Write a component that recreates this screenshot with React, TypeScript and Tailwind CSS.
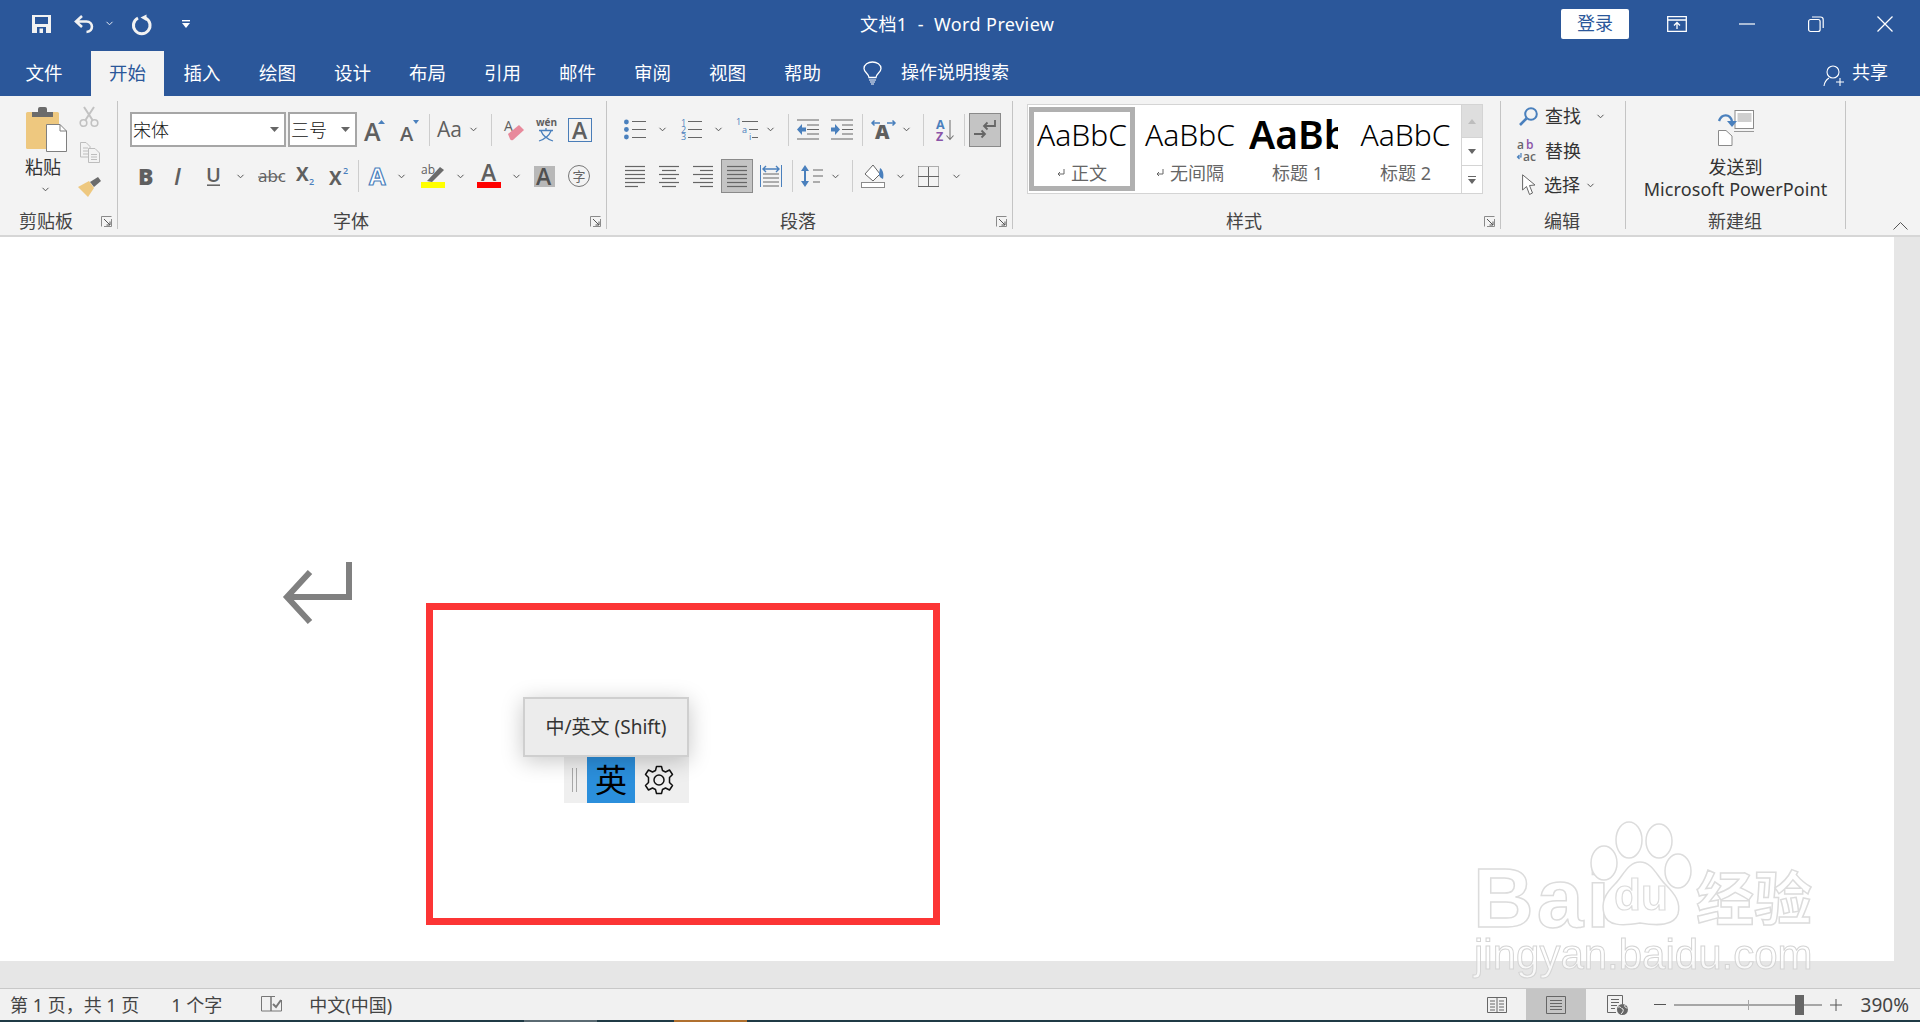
import React from "react";

const G = "#666666";
const B = "#4a80bd";
const LF = "Open Sans, Liberation Sans, sans-serif";

function S({ w, h, className = "", children }: { w: number; h: number; className?: string; children?: React.ReactNode }) {
  return (
    <svg width={w} height={h} viewBox={`0 0 ${w} ${h}`} fill="none" className={"shrink-0 overflow-visible " + className}>
      {children}
    </svg>
  );
}

function Chev({ className = "", color = "#555555" }: { className?: string; color?: string }) {
  return (
    <S w={7} h={5} className={className}>
      <path d="M.5 .8 L3.5 3.8 L6.5 .8" stroke={color} strokeWidth="1" />
    </S>
  );
}

function Sep({ className = "", h = "h-[32px]" }: { className?: string; h?: string }) {
  return <div className={"w-[1px] shrink-0 bg-[#cdcdcd] " + h + " " + className} />;
}

function Launcher({ className = "" }: { className?: string }) {
  return (
    <S w={11} h={11} className={className}>
      <path d="M.5 10.5 V.5 H10.5" stroke="#8a8a8a" />
      <path d="M10.5 3 V10.5 H3" stroke="#8a8a8a" />
      <path d="M3 3 L9 9 M9 5.5 V9 H5.5" stroke="#555" />
    </S>
  );
}

function Group({ w, label, labelMl, launcher, children }: { w: string; label: string; labelMl: string; launcher?: boolean; children: React.ReactNode }) {
  return (
    <div className={"mt-[5px] flex h-[128px] shrink-0 flex-col border-r border-[#c4c4c4] " + w}>
      <div className="h-[113px] shrink-0">{children}</div>
      <div className="flex h-[15px] items-center">
        <span className={"text-[18px] leading-[15px] whitespace-nowrap text-[#444] " + labelMl}>{label}</span>
        {launcher && <Launcher className="mr-[5px] ml-auto" />}
      </div>
    </div>
  );
}

function Lines({ w, rows }: { w: number; rows: [number, number][] }) {
  return (
    <S w={w} h={22}>
      {rows.map(([a, b], i) => (
        <path key={i} d={`M${a} ${1.5 + i * 4} H${b}`} stroke={G} strokeWidth="1.2" />
      ))}
    </S>
  );
}

function Letter({ ch, size, y, x = 0, fill = "#5f5f5f", weight = 600, style }: { w?: number; h?: number; ch: string; size: number; y: number; x?: number; fill?: string; weight?: number; style?: string }) {
  return (
    <text x={x} y={y} fontSize={size} fontFamily={LF} fontWeight={weight} fontStyle={style} fill={fill}>
      {ch}
    </text>
  );
}

function GalleryLabel({ text, mark, className = "" }: { text: string; mark?: boolean; className?: string }) {
  return (
    <div className={"flex h-[18px] items-center gap-[6px] text-[18px] leading-[18px] whitespace-nowrap text-[#666] " + className}>
      {mark && (
        <S w={8} h={8}>
          <path d="M7 0 V5 H1 M3 3 L1 5 L3 7" stroke="#666" />
        </S>
      )}
      {text}
    </div>
  );
}

const Sample = ({ className = "" }: { className?: string }) => (
  <div className={"text-[30px] leading-[30px] font-light whitespace-nowrap text-black " + className}>AaBbC</div>
);

function TopBar() {
  const tabs: [string, string][] = [
    ["插入", "w-[76px]"], ["绘图", "w-[75px]"], ["设计", "w-[75px]"], ["布局", "w-[75px]"],
    ["引用", "w-[75px]"], ["邮件", "w-[75px]"], ["审阅", "w-[75px]"], ["视图", "w-[75px]"], ["帮助", "w-[75px]"],
  ];
  return (
    <div className="bg-[#2b579a] text-white">
      <div className="flex h-[51px] items-center pb-[4px]">
        <S w={19} h={18} className="ml-[32px]">
          <path fillRule="evenodd" d="M0 0 H19 V18 H0 Z M3 2 V9 H16 V2 Z M5 12 V18 H14 V12 Z" fill="#f2f2f2" />
          <path d="M7.5 13.5 H11 V18 H7.5 Z" fill="#f2f2f2" />
        </S>
        <S w={22} h={20} className="ml-[22px]">
          <path d="M9 2 L3 7.5 L9 13 M3 7.5 H13.5 C20.5 7.5 21 17.5 13.5 18" stroke="#f2f2f2" strokeWidth="2.6" />
        </S>
        <Chev className="ml-[11px]" color="#e4e9f2" />
        <S w={21} h={20} className="ml-[18px]">
          <path d="M7 4 A8.3 8.3 0 1 0 14.5 4" stroke="#f2f2f2" strokeWidth="3" />
          <path d="M15.5 .5 V7 L9.5 3.5 Z" fill="#f2f2f2" />
        </S>
        <S w={8} h={8} className="ml-[30px]">
          <path d="M0 .7 H8" stroke="#fff" strokeWidth="1.4" />
          <path d="M0 3 H8 L4 8 Z" fill="#fff" />
        </S>
        <span className="ml-[670px] text-[18px] leading-[20px] tracking-[0.4px] whitespace-pre">文档1  -  Word Preview</span>
        <div className="ml-auto flex h-[30px] w-[68px] items-center justify-center rounded-[2px] bg-white text-[18px] text-[#2b579a]">登录</div>
        <S w={20} h={16} className="ml-[38px]">
          <path d="M.7 .7 H19.3 V15.3 H.7 Z M.7 4 H19.3" stroke="#fff" strokeWidth="1.3" />
          <path d="M10 13 V7 M7 9.5 L10 6.5 L13 9.5" stroke="#fff" strokeWidth="1.3" />
        </S>
        <S w={16} h={2} className="ml-[52px]">
          <path d="M0 1 H16" stroke="#fff" strokeWidth="1.2" />
        </S>
        <S w={16} h={16} className="ml-[53px]">
          <rect x=".6" y="3.5" width="11.5" height="12" rx="2" stroke="#fff" strokeWidth="1.2" />
          <path d="M4 1 H12.5 Q15.2 1 15.2 3.7 V12" stroke="#fff" strokeWidth="1.2" />
        </S>
        <S w={16} h={16} className="mr-[27px] ml-[53px]">
          <path d="M.5 .5 L15.5 15.5 M15.5 .5 L.5 15.5" stroke="#fff" strokeWidth="1.3" />
        </S>
      </div>
      <div className="flex h-[45px] items-stretch text-[18.5px]">
        <div className="mr-[3px] flex w-[88px] items-center justify-center pb-[2px]">文件</div>
        <div className="flex w-[73px] items-center justify-center bg-[#f3f3f3] pb-[2px] text-[#2b579a]">开始</div>
        {tabs.map(([t, w]) => (
          <div key={t} className={"flex items-center justify-center pb-[2px] " + w}>{t}</div>
        ))}
        <S w={19} h={24} className="mt-[10px] ml-[23px] self-start">
          <path d="M6 16.5 C6 13 1 11.5 1 7.5 C1 3.5 5 1 9.5 1 C14 1 18 3.5 18 7.5 C18 11.5 13 13 13 16.5 Z" stroke="#fff" strokeWidth="1.3" />
          <path d="M6 19 H13 M7 21 H12 M8 23 H11" stroke="#fff" strokeWidth="1.2" />
        </S>
        <div className="ml-[19px] flex items-center pb-[2px] text-[18px]">操作说明搜索</div>
        <S w={22} h={22} className="mt-[14px] ml-auto self-start">
          <circle cx="10" cy="7" r="6" stroke="#fff" strokeWidth="1.1" />
          <path d="M1 21 C1.5 17 3.5 14.5 6 13 M17 13 V21 M13 17 H21" stroke="#fff" strokeWidth="1.1" />
        </S>
        <div className="mr-[32px] ml-[7px] flex items-center pb-[2px] text-[18px]">共享</div>
      </div>
    </div>
  );
}

function Clipboard() {
  return (
    <Group w="w-[118px]" label="剪贴板" labelMl="ml-[19px]" launcher>
      <div className="flex">
        <div className="flex w-[78px] flex-col">
          <S w={41} h={45} className="mt-[6px] ml-[26px]">
            <rect x="0" y="5" width="33" height="37" rx="1.5" fill="#eec87f" />
            <path d="M6 10 V5 H12 V2 Q12 0 14 0 H19 Q21 0 21 2 V5 H27 V10 Z" fill="#6b6b6b" />
            <path d="M20.5 17.5 H34 L40.5 24 V44.5 H20.5 Z" fill="#fff" stroke="#7f7f7f" />
            <path d="M34 17.5 V24 H40.5" stroke="#7f7f7f" />
          </S>
          <div className="mt-[6px] ml-[25px] text-[18px] leading-[18px] text-[#333]">粘贴</div>
          <Chev className="mt-[11px] ml-[42px]" />
        </div>
        <div className="mt-[6px] flex flex-col">
          <S w={20} h={20} className="ml-[1px]">
            <path d="M5 0 L13.5 13 M15 0 L6.5 13" stroke="#c2c2c2" strokeWidth="2" />
            <circle cx="4.5" cy="16" r="3.3" stroke="#c2c2c2" strokeWidth="1.6" />
            <circle cx="15.5" cy="16" r="3.3" stroke="#c2c2c2" strokeWidth="1.6" />
          </S>
          <S w={20} h={21} className="mt-[15px] ml-[2px]">
            <path d="M.5 .5 H6 L10 4.5 V15 H.5 Z M3 6 H8 M3 9 H8 M3 12 H8" stroke="#bdbdbd" />
            <path d="M8.5 6.5 H15 L19.5 11 V20.5 H8.5 Z M11 12.5 H17 M11 15 H17 M11 17.5 H17" fill="#f3f3f3" stroke="#bdbdbd" />
          </S>
          <S w={23} h={20} className="mt-[14px]">
            <path d="M0 10 L11 4 L16 11 L10 20 Z" fill="#eec87f" />
            <path d="M12 5 L20 0 L23 4 L16 10 Z" fill="#6b6b6b" />
          </S>
        </div>
      </div>
    </Group>
  );
}

function FontGroup() {
  return (
    <Group w="w-[489px]" label="字体" labelMl="ml-[215px]" launcher>
      <div className="mt-[11px] flex h-[35px] items-center">
        <div className="ml-[12px] flex h-[35px] w-[156px] items-center border-2 border-[#a6a6a6] bg-white pl-[1px] text-[18px] leading-[18px] font-light text-[#111]">
          宋体
          <S w={9} h={5} className="mr-[5px] ml-auto">
            <path d="M0 0 H9 L4.5 5 Z" fill="#666" />
          </S>
        </div>
        <div className="ml-[2px] flex h-[35px] w-[69px] items-center border-2 border-[#a6a6a6] bg-white pl-[1px] text-[18px] leading-[18px] font-light text-[#111]">
          三号
          <S w={9} h={5} className="mr-[5px] ml-auto">
            <path d="M0 0 H9 L4.5 5 Z" fill="#666" />
          </S>
        </div>
        <S w={20} h={22} className="ml-[8px]">
          <Letter ch="A" size={25} y={22} x={-1} />
          <path d="M13 5 L16.5 1 L20 5 Z" fill={B} />
        </S>
        <S w={19} h={22} className="ml-[15px]">
          <Letter ch="A" size={20} y={22} x={0} />
          <path d="M13 1 H19 L16 5 Z" fill={B} />
        </S>
        <Sep className="ml-[10px]" />
        <S w={25} h={18} className="ml-[8px]">
          <Letter ch="Aa" size={21} y={16} x={-1} weight={500} />
        </S>
        <Chev className="ml-[7px]" />
        <Sep className="ml-[14px]" />
        <S w={20} h={22} className="ml-[12px]">
          <Letter ch="A" size={14} y={12} x={0} weight={500} />
          <path d="M4 15 L15 6 L20 11 L9 21 Q7 22 6 20 Z" fill="#e8899b" />
        </S>
        <S w={20} h={24} className="ml-[12px]">
          <Letter ch="wén" size={10} y={8} x={0} weight={700} />
          <path d="M10 10 V12 M3 12.5 H17 M5 13 C7 18 11 21 17 23 M15 13 C13 18 9 21 3 23" stroke={B} strokeWidth="1.3" />
        </S>
        <div className="ml-[12px] flex h-[24px] w-[24px] items-center justify-center border border-[#4a7db8]">
          <S w={18} h={18}>
            <Letter ch="A" size={23} y={18} x={1} />
          </S>
        </div>
      </div>
      <div className="mt-[12px] flex h-[34px] items-center">
        <S w={13} h={17} className="ml-[22px]">
          <Letter ch="B" size={23} y={17} x={-2} weight={800} />
        </S>
        <S w={12} h={17} className="ml-[20px]">
          <Letter ch="I" size={23} y={17} x={1} weight={600} style="italic" />
        </S>
        <S w={13} h={19} className="ml-[22px]">
          <Letter ch="U" size={20} y={15} x={-1} weight={600} />
          <path d="M0 18.2 H13" stroke="#5f5f5f" strokeWidth="1.5" />
        </S>
        <Chev className="ml-[17px]" />
        <S w={24} h={16} className="ml-[14px]">
          <Letter ch="abc" size={17} y={14} x={0} weight={500} />
          <path d="M0 9 H24" stroke="#5f5f5f" strokeWidth="1.1" />
        </S>
        <S w={18} h={18} className="ml-[15px]">
          <Letter ch="X" size={19} y={14} x={-1} weight={700} />
          <Letter ch="2" size={9} y={18} x={12} fill={B} />
        </S>
        <S w={19} h={18} className="ml-[15px]">
          <Letter ch="X" size={19} y={18} x={-1} weight={700} />
          <Letter ch="2" size={9} y={7} x={13} fill={B} />
        </S>
        <Sep className="ml-[9px]" />
        <S w={17} h={20} className="ml-[11px]">
          <text x="-1" y="19" fontSize="24" fontFamily={LF} fontWeight="700" fill="#fff" stroke="#4a80bd" strokeWidth="1.2">A</text>
        </S>
        <Chev className="ml-[11px]" />
        <S w={24} h={24} className="ml-[16px]">
          <Letter ch="ab" size={12} y={10} x={0} weight={500} />
          <path d="M6 17 L19 3 L23 6 L11 18 Z" fill="#6b6b6b" />
          <rect x="0" y="18" width="24" height="6" fill="#ffff00" />
        </S>
        <Chev className="ml-[12px]" />
        <S w={24} h={24} className="ml-[13px]">
          <Letter ch="A" size={23} y={17} x={4} />
          <rect x="0" y="18" width="24" height="6" fill="#ff0000" />
        </S>
        <Chev className="ml-[12px]" />
        <div className="ml-[14px] flex h-[21px] w-[21px] items-center justify-center bg-[#b8b8b8]">
          <S w={17} h={17}>
            <Letter ch="A" size={23} y={17} x={0} fill="#505050" />
          </S>
        </div>
        <div className="ml-[13px] flex h-[22px] w-[22px] items-center justify-center rounded-full border border-[#777] text-[13px] leading-none text-[#666]">字</div>
      </div>
    </Group>
  );
}

function ParagraphGroup() {
  const L: [number, number][] = [[0, 20], [0, 20], [0, 20], [0, 20], [0, 20], [0, 13]];
  const C: [number, number][] = [[0, 20], [3, 17], [0, 20], [3, 17], [0, 20], [3, 17]];
  const R: [number, number][] = [[0, 20], [7, 20], [0, 20], [7, 20], [0, 20], [7, 20]];
  const n = (ch: string, x: number, y: number) => (
    <text x={x} y={y} fontSize="9" fontFamily={LF} fill={B}>{ch}</text>
  );
  return (
    <Group w="w-[406px]" label="段落" labelMl="ml-[173px]" launcher>
      <div className="mt-[11px] flex h-[35px] items-center">
        <S w={22} h={21} className="ml-[17px]">
          <circle cx="2.4" cy="3" r="2.4" fill={B} />
          <circle cx="2.4" cy="10.5" r="2.4" fill={B} />
          <circle cx="2.4" cy="18" r="2.4" fill={B} />
          <path d="M8 2.5 H22 M8 10.5 H22 M8 18.5 H22" stroke={G} strokeWidth="1.1" />
        </S>
        <Chev className="ml-[13px]" />
        <S w={22} h={21} className="ml-[14px]">
          {n("1", 1, 7)}{n("2", 1, 14)}{n("3", 1, 21)}
          <path d="M8 2.5 H22 M8 10.5 H22 M8 18.5 H22" stroke={G} strokeWidth="1.1" />
        </S>
        <Chev className="ml-[13px]" />
        <S w={22} h={21} className="ml-[14px]">
          {n("1", 0, 6)}{n("a", 6, 14)}{n("i", 13, 21)}
          <path d="M6 2.5 H22 M13 10.5 H22 M16 18.5 H22" stroke={G} strokeWidth="1.1" />
        </S>
        <Chev className="ml-[9px]" />
        <Sep className="ml-[14px]" />
        <S w={22} h={21} className="ml-[8px]">
          <path d="M0 1 H22 M10 6 H22 M10 10.5 H22 M10 15 H22 M0 20 H22" stroke={G} strokeWidth="1.1" />
          <path d="M0 10.5 L5 5 V8.5 H9 V12.5 H5 V16 Z" fill={B} />
        </S>
        <S w={22} h={21} className="ml-[12px]">
          <path d="M0 1 H22 M11 6 H22 M11 10.5 H22 M11 15 H22 M0 20 H22" stroke={G} strokeWidth="1.1" />
          <path d="M9 10.5 L4 5 V8.5 H0 V12.5 H4 V16 Z" fill={B} />
        </S>
        <Sep className="ml-[9px]" />
        <S w={23} h={19} className="ml-[9px]">
          <path d="M0 3 H8 M2.5 .5 L0 3 L2.5 5.5 M15 3 H23 M20.5 .5 L23 3 L20.5 5.5" stroke={B} strokeWidth="1.5" />
          <text x="3" y="19" fontSize="20" fontFamily={LF} fontWeight="800" fill="#5f5f5f">A</text>
        </S>
        <Chev className="ml-[8px]" />
        <Sep className="ml-[13px]" />
        <S w={18} h={22} className="ml-[12px]">
          <text x="0" y="10" fontSize="12.5" fontFamily={LF} fontWeight="700" fill={B}>A</text>
          <text x="0" y="22" fontSize="12.5" fontFamily={LF} fontWeight="700" fill="#8a55a8">Z</text>
          <path d="M14 1 V20 M10.5 16.5 L14 20.5 L17.5 16.5" stroke="#777" strokeWidth="1.1" />
        </S>
        <Sep className="ml-[10px]" />
        <div className="ml-[4px] flex h-[34px] w-[32px] items-center justify-center border border-[#8a8a8a] bg-[#c4c4c4]">
          <S w={22} h={20}>
            <path d="M21 0 V6 H10 M13.5 2.5 L10 6 L13.5 9.5" stroke="#666" strokeWidth="1.8" />
            <path d="M0 14 H11 M7.5 10.5 L11 14 L7.5 17.5" stroke="#666" strokeWidth="1.8" />
          </S>
        </div>
      </div>
      <div className="mt-[12px] flex h-[34px] items-center">
        <div className="ml-[18px]"><Lines w={20} rows={L} /></div>
        <div className="ml-[14px]"><Lines w={20} rows={C} /></div>
        <div className="ml-[14px]"><Lines w={20} rows={R} /></div>
        <div className="ml-[8px] flex h-[34px] w-[32px] items-center justify-center border border-[#8a8a8a] bg-[#c4c4c4]">
          <S w={20} h={22}>
            {[0, 1, 2, 3, 4, 5].map((i) => (
              <path key={i} d={`M0 ${1.5 + i * 4} H20`} stroke={G} strokeWidth="1.2" />
            ))}
          </S>
        </div>
        <S w={22} h={22} className="ml-[7px]">
          <path d="M.5 0 V22 M21.5 0 V22" stroke={B} />
          <path d="M3 4 H19 M6 1 L3 4 L6 7 M16 1 L19 4 L16 7" stroke={B} strokeWidth="1.4" />
          <path d="M3 9 H19 M3 13 H19 M3 17 H19 M3 21 H19" stroke={G} />
        </S>
        <Sep className="ml-[10px]" />
        <S w={22} h={22} className="ml-[8px]">
          <path d="M4 0 L8 6 H5 V16 H8 L4 22 L0 16 H3 V6 H0 Z" fill={B} />
          <path d="M12 5 H22 M12 11 H22 M12 17 H19" stroke={G} strokeWidth="1.2" />
        </S>
        <Chev className="ml-[9px]" />
        <Sep className="ml-[13px]" />
        <S w={24} h={24} className="ml-[8px]">
          <path d="M12 1 L4 10 L12 17 L19 10 Z" fill="#fff" stroke="#666" />
          <path d="M19 4 C22 6 23 10 22 15 C20 14 18 13 18 10" fill={B} />
          <rect x=".5" y="18.5" width="23" height="5" fill="#fff" stroke="#8a8a8a" />
        </S>
        <Chev className="ml-[12px]" />
        <S w={21} h={21} className="ml-[14px]">
          <path d="M.5 .5 H20.5 V20.5 M.5 .5 V20.5" stroke="#666" strokeDasharray="1 1" />
          <path d="M0 10.5 H21 M0 20.5 H21 M10.5 1 V20" stroke="#666" />
        </S>
        <Chev className="ml-[14px]" />
      </div>
    </Group>
  );
}

function StylesGroup() {
  return (
    <Group w="w-[488px]" label="样式" labelMl="ml-[213px]" launcher>
      <div className="mt-[3px] ml-[14px] flex h-[90px] w-[456px] border border-[#d4d4d4] bg-white">
        <div className="mt-[2px] flex h-[84px]">
          <div className="ml-[1px] flex w-[106px] flex-col items-center border-[5px] border-[#b0b0b0] pt-[8px]">
            <Sample />
            <GalleryLabel text="正文" mark className="mt-[14px]" />
          </div>
          <div className="flex w-[110px] flex-col items-center pt-[13px]">
            <Sample />
            <GalleryLabel text="无间隔" mark className="mt-[14px]" />
          </div>
          <div className="flex w-[105px] flex-col items-center pt-[7px]">
            <div className="ml-[-8px] w-[89px] overflow-hidden text-[39px] leading-[39px] font-semibold whitespace-nowrap text-black">AaBbC</div>
            <GalleryLabel text="标题 1" className="mt-[11px]" />
          </div>
          <div className="flex w-[111px] flex-col items-center pt-[13px]">
            <Sample />
            <GalleryLabel text="标题 2" className="mt-[14px]" />
          </div>
        </div>
        <div className="ml-auto flex w-[21px] flex-col border-l border-[#d4d4d4]">
          <div className="flex h-[32px] items-center justify-center bg-[#dedede]">
            <S w={8} h={5}><path d="M0 5 H8 L4 0 Z" fill="#bdbdbd" /></S>
          </div>
          <div className="flex h-[29px] items-center justify-center border-y border-[#d4d4d4]">
            <S w={8} h={5}><path d="M0 0 H8 L4 5 Z" fill="#666" /></S>
          </div>
          <div className="flex flex-1 flex-col items-center justify-center gap-[2px]">
            <div className="h-[1px] w-[8px] bg-[#666]" />
            <S w={8} h={5}><path d="M0 0 H8 L4 5 Z" fill="#666" /></S>
          </div>
        </div>
      </div>
    </Group>
  );
}

function EditGroup() {
  return (
    <Group w="w-[125px]" label="编辑" labelMl="ml-[43px]">
      <div className="flex flex-col text-[18px] leading-[18px] text-[#333]">
        <div className="flex h-[30px] items-center">
          <S w={19} h={19} className="ml-[18px]">
            <circle cx="12" cy="7" r="5.8" stroke={B} strokeWidth="2" />
            <path d="M7.5 11.5 L1 18" stroke={B} strokeWidth="2.6" />
          </S>
          <span className="ml-[7px]">查找</span>
          <Chev className="ml-[16px]" />
        </div>
        <div className="mt-[5px] flex h-[30px] items-center">
          <S w={23} h={22} className="ml-[16px]">
            <text x="0" y="9" fontSize="12" fontFamily={LF} fontWeight="600" fill="#666">a</text>
            <text x="9" y="9" fontSize="12" fontFamily={LF} fontWeight="600" fill="#8a55a8">b</text>
            <text x="6" y="21" fontSize="12" fontFamily={LF} fontWeight="600" fill="#666">ac</text>
            <path d="M4 13 V17 H1 M2.5 15 L.5 17 L2.5 19" stroke={B} strokeWidth="1.2" />
          </S>
          <span className="ml-[5px]">替换</span>
        </div>
        <div className="mt-[4px] flex h-[30px] items-center">
          <S w={14} h={22} className="ml-[21px]">
            <path d="M.6 .8 V16 L4.5 12.5 L7.5 20.5 L10.5 19 L7.5 11.5 L13 11 Z" fill="#fff" stroke="#666" />
          </S>
          <span className="ml-[8px]">选择</span>
          <Chev className="ml-[7px]" />
        </div>
      </div>
    </Group>
  );
}

function NewGroup() {
  return (
    <Group w="w-[220px]" label="新建组" labelMl="ml-[82px]">
      <div className="flex flex-col items-center text-[18px] leading-[22px] text-[#333]">
        <S w={36} h={36} className="mt-[9px]">
          <rect x="17" y=".5" width="18.5" height="18" fill="#fff" stroke="#8a8a8a" />
          <rect x="19.5" y="3" width="14" height="9" fill="#cfcfcf" />
          <path d="M16 21.5 H36" stroke="#999" />
          <path d="M.5 20.5 H8 L14 26 V35.5 H.5 Z" fill="#fff" stroke="#8a8a8a" />
          <path d="M1 11 C4 3 12 4 14 11" stroke={B} strokeWidth="2.4" />
          <path d="M9 11 H19 L14 17 Z" fill={B} />
        </S>
        <div className="mt-[10px]">发送到</div>
        <div className="tracking-[0.1px] whitespace-nowrap">Microsoft PowerPoint</div>
      </div>
    </Group>
  );
}

function Ribbon() {
  return (
    <div className="flex h-[141px] border-b-2 border-[#d6d6d6] bg-[#f3f3f3]">
      <Clipboard />
      <FontGroup />
      <ParagraphGroup />
      <StylesGroup />
      <EditGroup />
      <NewGroup />
      <div className="flex flex-1 items-end justify-end pr-[12px] pb-[5px]">
        <S w={15} h={8}>
          <path d="M.5 7.5 L7.5 .5 L14.5 7.5" stroke="#555" />
        </S>
      </div>
    </div>
  );
}

function Status() {
  return (
    <div className="flex h-[32px] items-center border-t border-[#c8c8c8] bg-[#f1f1f1] text-[18px] leading-[20px] text-[#444]">
      <span className="ml-[10px] whitespace-pre">第 1 页，共 1 页</span>
      <span className="ml-[32px] whitespace-pre">1 个字</span>
      <S w={21} h={17} className="ml-[39px]">
        <path d="M.5 .5 H10 V15 H.5 Z M10 15 V.5 H14 M20.5 4 V15 H10" stroke="#777" />
        <path d="M12 8 L15 11 L20 4" stroke="#777" strokeWidth="2" />
      </S>
      <span className="ml-[27px]">中文(中国)</span>
      <S w={20} h={18} className="ml-auto">
        <path d="M.5 1.5 H10 V16.5 H.5 Z M10 1.5 H19.5 V16.5 H10 M3 5 H8 M3 8 H8 M3 11 H8 M3 14 H8 M12 5 H17 M12 8 H17 M12 11 H17 M12 14 H17" stroke="#666" />
      </S>
      <div className="ml-[19px] flex h-full w-[60px] items-center justify-center bg-[#c5c5c5]">
        <S w={20} h={18}>
          <path d="M.5 .5 H19.5 V17.5 H.5 Z M4 4.5 H16 M4 7.5 H16 M4 10.5 H16 M4 13.5 H16" stroke="#666" />
        </S>
      </div>
      <S w={21} h={20} className="ml-[21px]">
        <path d="M.5 .5 H15.5 V9 M.5 .5 V17.5 H9 M4 4.5 H12 M4 7.5 H12 M4 10.5 H10 M4 13.5 H8" stroke="#666" />
        <circle cx="15.5" cy="14.5" r="5.5" fill="#666" />
        <path d="M11 12 C14 11 14 14 16 14 C17 16 15 18 14 19 M18 10 C17 12 19 13 20.5 13" stroke="#f1f1f1" />
      </S>
      <div className="ml-[26px] h-[1px] w-[12px] bg-[#555]" />
      <div className="relative ml-[8px] h-[2px] w-[148px] bg-[#a6a6a6]">
        <div className="absolute top-[-4px] left-[74px] h-[10px] w-[1px] bg-[#a6a6a6]" />
        <div className="absolute top-[-9px] left-[121px] h-[20px] w-[9px] bg-[#666]" />
      </div>
      <S w={12} h={12} className="ml-[8px]">
        <path d="M0 6 H12 M6 0 V12" stroke="#555" />
      </S>
      <span className="mr-[11px] ml-[19px] text-[19px]">390%</span>
    </div>
  );
}

function Watermark() {
  const stroke = "#dcdcdc";
  return (
    <div className="pointer-events-none absolute top-[812px] left-[1470px] h-[175px] w-[350px] [font-family:'Liberation_Sans',sans-serif] blur-[0.4px]">
      <div className="absolute top-[38px] left-[3px] text-[84px] leading-[96px] font-bold tracking-[3px] text-white [-webkit-text-stroke:1.5px_#dcdcdc]">Bai</div>
      <S w={100} h={115} className="absolute top-[4px] left-[120px]">
        <ellipse cx="14" cy="47" rx="13" ry="17" fill="#fff" stroke={stroke} strokeWidth="1.5" />
        <ellipse cx="39" cy="24" rx="13" ry="18" fill="#fff" stroke={stroke} strokeWidth="1.5" />
        <ellipse cx="69" cy="25" rx="13" ry="17" fill="#fff" stroke={stroke} strokeWidth="1.5" />
        <ellipse cx="88" cy="55" rx="13" ry="17" fill="#fff" stroke={stroke} strokeWidth="1.5" />
        <path d="M50 46 C38 46 33 60 25 68 C15 78 11 86 14 98 C17 110 32 110 50 107 C68 110 84 110 88 98 C91 86 85 78 75 68 C67 60 62 46 50 46 Z" fill="#fff" stroke={stroke} strokeWidth="1.5" />
      </S>
      <div className="absolute top-[58px] left-[144px] text-[44px] leading-[50px] font-bold text-white [-webkit-text-stroke:1.2px_#dcdcdc]">du</div>
      <div className="absolute top-[48px] left-[226px] [font-family:'Noto_Sans_CJK_SC',sans-serif] text-[58px] leading-[70px] font-bold text-white [-webkit-text-stroke:1.5px_#dcdcdc]">经验</div>
      <div className="absolute top-[118px] left-[4px] text-[42px] leading-[50px] text-white/70 [-webkit-text-stroke:1px_#d4d4d4]">jingyan.baidu.com</div>
    </div>
  );
}

export default function App() {
  return (
    <div className="relative h-[1022px] w-[1920px] overflow-hidden bg-white [font-family:'Noto_Sans','Noto_Sans_CJK_SC',sans-serif]">
      <TopBar />
      <Ribbon />
      <div className="flex h-[724px]">
        <div className="w-[1894px] bg-white" />
        <div className="flex-1 bg-[#e6e6e6]" />
      </div>
      <div className="h-[27px] bg-[#e6e6e6]" />
      <Status />
      <div className="flex h-[2px] bg-[#1f3a45]">
        <div className="ml-[524px] w-[73px] bg-[#5a6a72]" />
        <div className="ml-[77px] w-[73px] bg-[#b0702f]" />
      </div>

      <S w={72} h={64} className="absolute top-[561px] left-[282px]">
        <path d="M67 1 V36 H6" stroke="#808080" strokeWidth="6" />
        <path d="M28 11 L5 36 L28 61" stroke="#808080" strokeWidth="6" />
      </S>
      <div className="absolute top-[603px] left-[426px] h-[322px] w-[514px] border-[7px] border-[#fc3535]" />
      <div className="absolute top-[757px] left-[564px] flex h-[46px] w-[125px] items-center bg-[#efefef]">
        <div className="ml-[8px] h-[24px] w-[5px] border-x border-[#a8a8a8]" />
        <div className="ml-[10px] flex h-full w-[48px] items-center justify-center bg-[#2b8fdc] text-[32px] leading-none text-black">英</div>
        <S w={30} h={30} className="ml-[9px]">
          <path d="M12.5 1.5 H17.5 L18.5 5.5 L21.5 7 L25.5 5 L28.5 9.5 L25.5 12.5 V17.5 L28.5 20.5 L25.5 25 L21.5 23 L18.5 24.5 L17.5 28.5 H12.5 L11.5 24.5 L8.5 23 L4.5 25 L1.5 20.5 L4.5 17.5 V12.5 L1.5 9.5 L4.5 5 L8.5 7 L11.5 5.5 Z" stroke="#111" strokeWidth="1.5" strokeLinejoin="round" />
          <circle cx="15" cy="15" r="5" stroke="#111" strokeWidth="1.5" />
        </S>
      </div>
      <div className="absolute top-[697px] left-[523px] flex h-[60px] w-[166px] items-center justify-center border-2 border-[#cfcfcf] bg-[#ececec] text-[19px] leading-[20px] whitespace-nowrap text-[#333] shadow-[0_4px_22px_rgba(0,0,0,0.22)]">
        中/英文 (Shift)
      </div>
      <Watermark />
    </div>
  );
}
